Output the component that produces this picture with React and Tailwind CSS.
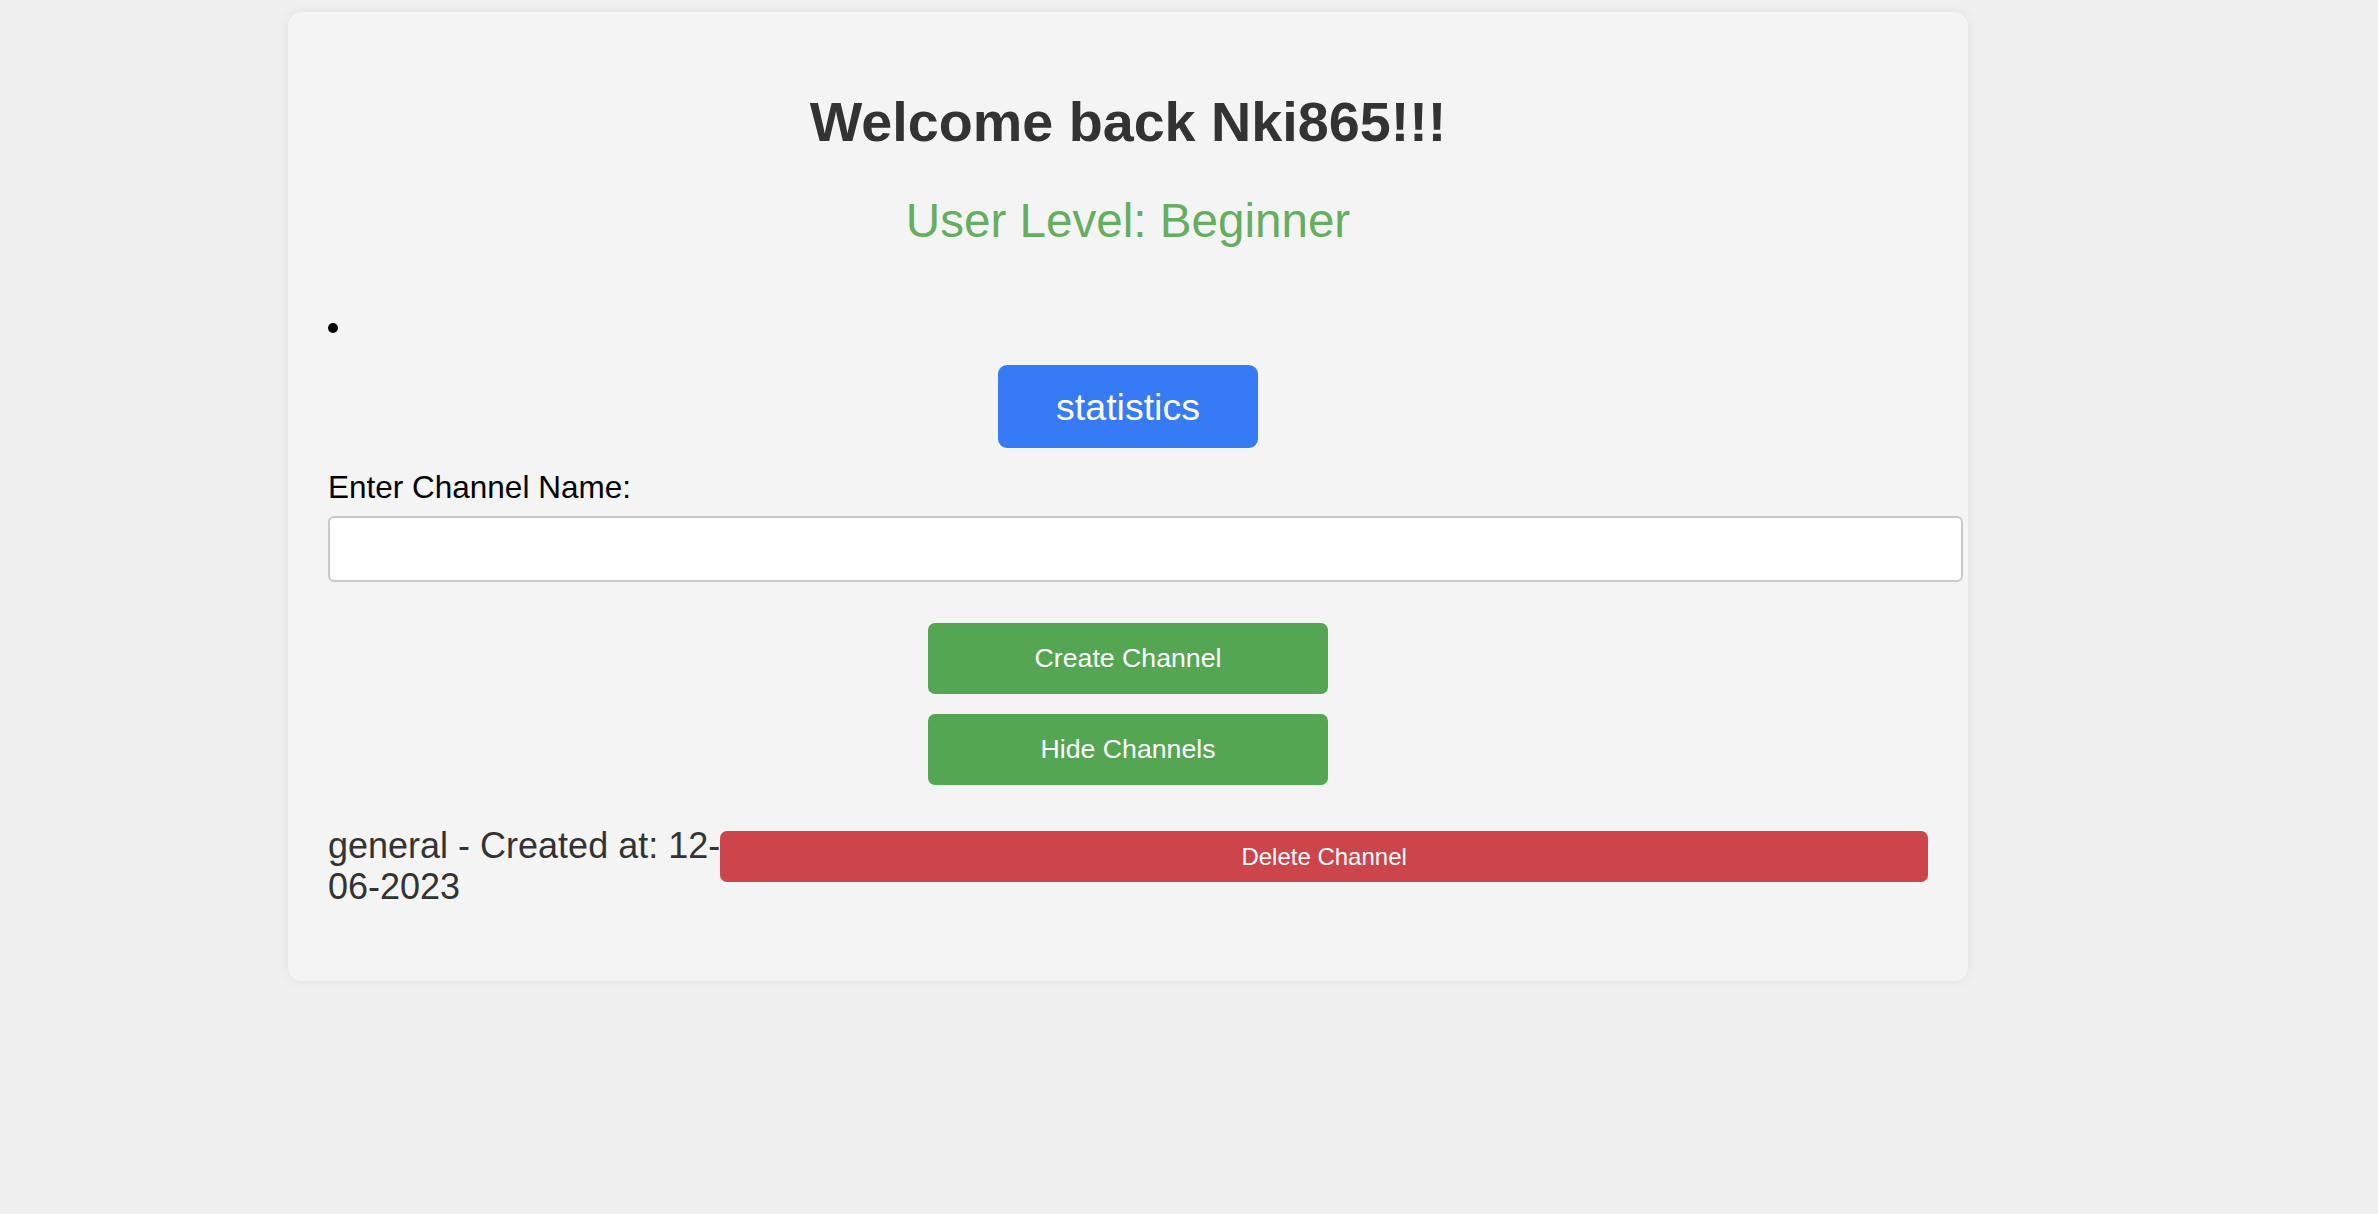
export default function App() {
  return (
    <div
      className="h-[1214px] w-full overflow-hidden bg-[#f0f0f0] pt-[12px]"
      style={{ fontFamily: '"Liberation Sans", Arial, sans-serif' }}
    >
      <div className="ml-[288px] w-[1680px] rounded-[14px] bg-[#f4f4f4] px-[40px] pt-[40px] pb-[73px] shadow-[0_0_12px_rgba(0,0,0,0.08)]">
        <h1 className="mt-[38px] text-center text-[55.7px] leading-[64px] font-bold text-[#333333]">
          Welcome back Nki865!!!
        </h1>
        <h2 className="mt-[40px] text-center text-[47.6px] leading-[54px] font-normal text-[#66ae5f]">
          User Level: Beginner
        </h2>
        <div className="mt-[75px] h-[10px] w-[10px] rounded-full bg-black" />
        <div className="mt-[32px] flex justify-center">
          <button className="h-[83px] w-[260px] rounded-[9px] bg-[#377af6] pt-[2px] text-[37.5px] leading-none text-white">
            statistics
          </button>
        </div>
        <label className="mt-[21px] block text-[31.5px] leading-[36px] text-black">
          Enter Channel Name:
        </label>
        <input
          type="text"
          className="mt-[11px] block h-[66px] w-[1635px] rounded-[6px] border-2 border-[#c9c9c9] bg-white px-4 outline-none"
        />
        <div className="mt-[41px] flex flex-col items-center gap-[20px]">
          <button className="h-[71px] w-[400px] rounded-[7px] bg-[#54a653] text-[26.7px] leading-none text-white">
            Create Channel
          </button>
          <button className="h-[71px] w-[400px] rounded-[7px] bg-[#54a653] text-[26.7px] leading-none text-white">
            Hide Channels
          </button>
        </div>
        <div className="mt-[40px] flex items-start">
          <div className="whitespace-nowrap text-[36px] leading-[41.4px] text-[#333333]">
            general - Created at: 12-
            <br />
            06-2023
          </div>
          <button className="mt-[6px] h-[51px] flex-1 rounded-[7px] bg-[#cc454b] text-[24px] leading-none text-white">
            Delete Channel
          </button>
        </div>
      </div>
    </div>
  );
}
